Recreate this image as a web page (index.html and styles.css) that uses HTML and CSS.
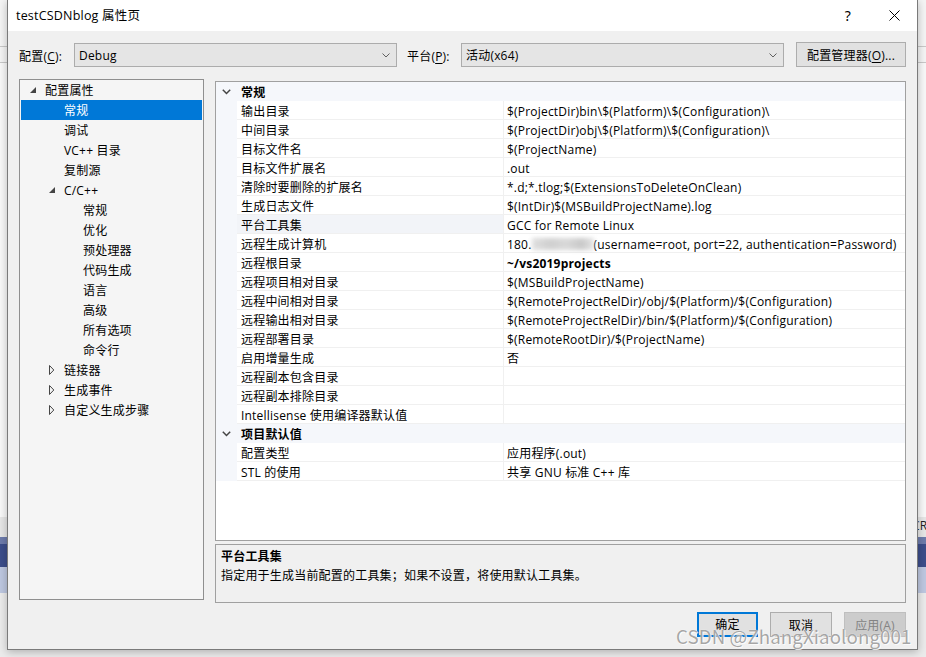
FILE: index.html
```html
<!DOCTYPE html>
<html lang="zh-CN">
<head>
<meta charset="utf-8">
<title>testCSDNblog 属性页</title>
<link rel="stylesheet" href="styles.css">
</head>
<body>
<div class="screen">
  <span class="behind-text">CR</span>
  <div class="dialog">
    <div class="titlebar">
      <span class="title">testCSDNblog 属性页</span>
      <span class="cap-btn help">?</span>
      <span class="cap-btn close">
        <svg width="11" height="11" viewBox="0 0 11 11"><path d="M0.5 0.5 L10.5 10.5 M10.5 0.5 L0.5 10.5" stroke="#000" stroke-width="1" fill="none"/></svg>
      </span>
    </div>
    <div class="content">
      <div class="toolbar">
        <span class="tb-label">配置(<u>C</u>):</span>
        <div class="combo"><span>Debug</span>
          <svg class="chev" width="8" height="5" viewBox="0 0 8 5"><path d="M0.5 0.5 L4 4 L7.5 0.5" stroke="#606060" stroke-width="1" fill="none"/></svg>
        </div>
        <span class="tb-label second">平台(<u>P</u>):</span>
        <div class="combo"><span>活动(x64)</span>
          <svg class="chev" width="8" height="5" viewBox="0 0 8 5"><path d="M0.5 0.5 L4 4 L7.5 0.5" stroke="#606060" stroke-width="1" fill="none"/></svg>
        </div>
        <div class="btn mgr">配置管理器(<u>O</u>)...</div>
      </div>

      <div class="main">
        <div class="tree">
          <div class="ti l0"><span class="ic"><svg width="6" height="6" viewBox="0 0 6 6"><polygon points="6,0 6,6 0,6" fill="#444"/></svg></span>配置属性</div>
          <div class="ti l1 sel"><span class="ic"></span>常规</div>
          <div class="ti l1"><span class="ic"></span>调试</div>
          <div class="ti l1"><span class="ic"></span>VC++ 目录</div>
          <div class="ti l1"><span class="ic"></span>复制源</div>
          <div class="ti l1"><span class="ic"><svg width="6" height="6" viewBox="0 0 6 6"><polygon points="6,0 6,6 0,6" fill="#444"/></svg></span>C/C++</div>
          <div class="ti l2"><span class="ic"></span>常规</div>
          <div class="ti l2"><span class="ic"></span>优化</div>
          <div class="ti l2"><span class="ic"></span>预处理器</div>
          <div class="ti l2"><span class="ic"></span>代码生成</div>
          <div class="ti l2"><span class="ic"></span>语言</div>
          <div class="ti l2"><span class="ic"></span>高级</div>
          <div class="ti l2"><span class="ic"></span>所有选项</div>
          <div class="ti l2"><span class="ic"></span>命令行</div>
          <div class="ti l1"><span class="ic"><svg width="6" height="10" viewBox="0 0 6 10"><polygon points="0.5,0.5 4.8,5 0.5,9.5" fill="none" stroke="#444" stroke-width="1"/></svg></span>链接器</div>
          <div class="ti l1"><span class="ic"><svg width="6" height="10" viewBox="0 0 6 10"><polygon points="0.5,0.5 4.8,5 0.5,9.5" fill="none" stroke="#444" stroke-width="1"/></svg></span>生成事件</div>
          <div class="ti l1"><span class="ic"><svg width="6" height="10" viewBox="0 0 6 10"><polygon points="0.5,0.5 4.8,5 0.5,9.5" fill="none" stroke="#444" stroke-width="1"/></svg></span>自定义生成步骤</div>
        </div>

        <div class="right">
          <div class="grid">
            <div class="cat"><span class="mg"><svg width="9" height="6" viewBox="0 0 9 6"><path d="M0.8 0.8 L4.5 4.5 L8.2 0.8" stroke="#444" stroke-width="1.5" fill="none"/></svg></span><span class="cat-label">常规</span></div>
            <div class="row"><span class="mg"></span><span class="lab">输出目录</span><span class="val">$(ProjectDir)bin\$(Platform)\$(Configuration)\</span></div>
            <div class="row"><span class="mg"></span><span class="lab">中间目录</span><span class="val">$(ProjectDir)obj\$(Platform)\$(Configuration)\</span></div>
            <div class="row"><span class="mg"></span><span class="lab">目标文件名</span><span class="val">$(ProjectName)</span></div>
            <div class="row"><span class="mg"></span><span class="lab">目标文件扩展名</span><span class="val">.out</span></div>
            <div class="row"><span class="mg"></span><span class="lab">清除时要删除的扩展名</span><span class="val">*.d;*.tlog;$(ExtensionsToDeleteOnClean)</span></div>
            <div class="row"><span class="mg"></span><span class="lab">生成日志文件</span><span class="val">$(IntDir)$(MSBuildProjectName).log</span></div>
            <div class="row cur"><span class="mg"></span><span class="lab">平台工具集</span><span class="val">GCC for Remote Linux</span></div>
            <div class="row"><span class="mg"></span><span class="lab">远程生成计算机</span><span class="val">180.<span class="blur"></span>(username=root, port=22, authentication=Password)</span></div>
            <div class="row"><span class="mg"></span><span class="lab">远程根目录</span><span class="val bold">~/vs2019projects</span></div>
            <div class="row"><span class="mg"></span><span class="lab">远程项目相对目录</span><span class="val">$(MSBuildProjectName)</span></div>
            <div class="row"><span class="mg"></span><span class="lab">远程中间相对目录</span><span class="val">$(RemoteProjectRelDir)/obj/$(Platform)/$(Configuration)</span></div>
            <div class="row"><span class="mg"></span><span class="lab">远程输出相对目录</span><span class="val">$(RemoteProjectRelDir)/bin/$(Platform)/$(Configuration)</span></div>
            <div class="row"><span class="mg"></span><span class="lab">远程部署目录</span><span class="val">$(RemoteRootDir)/$(ProjectName)</span></div>
            <div class="row"><span class="mg"></span><span class="lab">启用增量生成</span><span class="val">否</span></div>
            <div class="row"><span class="mg"></span><span class="lab">远程副本包含目录</span><span class="val"></span></div>
            <div class="row"><span class="mg"></span><span class="lab">远程副本排除目录</span><span class="val"></span></div>
            <div class="row"><span class="mg"></span><span class="lab">Intellisense 使用编译器默认值</span><span class="val"></span></div>
            <div class="cat"><span class="mg"><svg width="9" height="6" viewBox="0 0 9 6"><path d="M0.8 0.8 L4.5 4.5 L8.2 0.8" stroke="#444" stroke-width="1.5" fill="none"/></svg></span><span class="cat-label">项目默认值</span></div>
            <div class="row"><span class="mg"></span><span class="lab">配置类型</span><span class="val">应用程序(.out)</span></div>
            <div class="row"><span class="mg"></span><span class="lab">STL 的使用</span><span class="val">共享 GNU 标准 C++ 库</span></div>
          </div>
          <div class="desc">
            <div class="desc-title">平台工具集</div>
            <div class="desc-text">指定用于生成当前配置的工具集；如果不设置，将使用默认工具集。</div>
          </div>
        </div>
      </div>

      <div class="buttons">
        <div class="btn ok">确定</div>
        <div class="btn cancel">取消</div>
        <div class="btn apply">应用(A)</div>
      </div>
    </div>
  </div>
  <div class="watermark">CSDN @ZhangXiaolong001</div>
</div>
</body>
</html>
```

FILE: styles.css
```css
html, body {
  margin: 0;
  padding: 0;
}
body {
  width: 926px;
  height: 657px;
  overflow: hidden;
  font-family: "Open Sans", "Noto Sans CJK SC", sans-serif;
  font-size: 12px;
  letter-spacing: 0.2px;
  color: #000;
  background: linear-gradient(to bottom,
    #f4f4f4 0, #f4f4f4 46px, #c8c8c8 46px, #c8c8c8 47px,
    #f4f4f4 47px, #f4f4f4 62px, #c8c8c8 62px, #c8c8c8 63px,
    #f8f8f8 63px, #f8f8f8 517px, #e6e6e6 517px, #e6e6e6 537px,
    #6d7bab 537px, #6d7bab 544px, #3c4d8a 544px, #3c4d8a 567px,
    #bdc7e0 567px, #bdc7e0 593px, #ebebeb 593px, #ebebeb 657px);
}
.screen {
  position: relative;
  width: 926px;
  height: 657px;
}
.behind-text {
  position: absolute;
  left: 912px;
  top: 518px;
  font-size: 12px;
  line-height: 16px;
  color: #222;
}
.dialog {
  position: relative;
  margin-left: 7px;
  width: 911px;
  height: 650px;
  box-sizing: border-box;
  border: 1px solid #7a7a7a;
  border-top: none;
  background: #f0f0f0;
  box-shadow: 0 2px 8px rgba(0, 0, 0, 0.25);
  display: flex;
  flex-direction: column;
}
.titlebar {
  height: 31px;
  background: #fff;
  display: flex;
  align-items: center;
  padding-left: 8px;
  flex-shrink: 0;
}
.title {
  font-size: 12.5px;
  line-height: 16px;
  margin-top: 1px;
}
.cap-btn {
  width: 46px;
  height: 31px;
  display: flex;
  align-items: center;
  justify-content: center;
}
.help {
  margin-left: auto;
  font-size: 14px;
  font-family: "Noto Sans", sans-serif;
  padding-bottom: 1px;
  box-sizing: border-box;
}
.content {
  padding: 11px 11px 0 11px;
  flex: 1;
}
.toolbar {
  display: flex;
  align-items: flex-start;
  height: 25px;
}
.tb-label {
  width: 55px;
  line-height: 25px;
  padding-top: 2px;
  flex-shrink: 0;
}
.tb-label.second {
  width: 54px;
  margin-left: 10px;
}
u {
  text-decoration: underline;
  text-underline-offset: 2px;
}
.combo {
  width: 323px;
  height: 24px;
  margin-top: 1px;
  box-sizing: border-box;
  border: 1px solid #acacac;
  background: #e5e5e5;
  display: flex;
  align-items: center;
  padding: 2px 6px 0 4px;
  line-height: 18px;
}
.combo .chev {
  margin-left: auto;
  margin-top: -1px;
}
.btn {
  box-sizing: border-box;
  height: 25px;
  border: 1px solid #adadad;
  background: #e1e1e1;
  display: flex;
  align-items: center;
  justify-content: center;
  line-height: 18px;
  padding-top: 2px;
}
.btn.mgr {
  width: 110px;
  margin-left: 12px;
}
.main {
  display: flex;
  gap: 11px;
  margin-top: 12px;
  height: 524px;
}
.tree {
  width: 185px;
  height: 521px;
  box-sizing: border-box;
  border: 1px solid #8f8f8f;
  background: #f5f5f5;
  padding: 0 1px;
}
.ti {
  height: 20px;
  box-sizing: border-box;
  padding-top: 2px;
  line-height: 18px;
  display: flex;
  align-items: center;
  white-space: nowrap;
}
.ti .ic {
  width: 15px;
  height: 18px;
  margin-top: -2px;
  display: flex;
  align-items: center;
  flex-shrink: 0;
}
.ti.l0 { padding-left: 9px; }
.ti.l1 { padding-left: 28px; }
.ti.l2 { padding-left: 47px; }
.ti.sel {
  background: #0078d7;
  color: #fff;
}
.right {
  width: 691px;
  margin-top: 2px;
  display: flex;
  flex-direction: column;
}
.grid {
  height: 460px;
  box-sizing: border-box;
  border: 1px solid #a0a0a0;
  background: #fff;
}
.cat, .row {
  display: flex;
  height: 19px;
}
.mg {
  width: 21px;
  flex-shrink: 0;
  background: #f5f7fb;
  display: flex;
  align-items: center;
  justify-content: center;
}
.cat {
  background: #f5f7fb;
}
.cat .mg svg {
  margin-top: 1px;
}
.cat-label {
  font-weight: bold;
  padding: 2px 0 0 4px;
  line-height: 18px;
}
.lab {
  flex-shrink: 0;
  border-right: 1px solid #f0f0f0;
  border-bottom: 1px solid #f0f0f0;
  padding: 2px 0 0 4px;
  box-sizing: border-box;
  width: 267px;
  line-height: 17px;
  white-space: nowrap;
}
.row.cur .lab {
  background: #f2f4f8;
}
.val {
  flex: 1;
  border-bottom: 1px solid #f0f0f0;
  padding: 2px 0 0 3px;
  box-sizing: border-box;
  line-height: 17px;
  white-space: nowrap;
}
.val.bold {
  font-weight: bold;
}
.blur {
  display: inline-block;
  width: 62px;
  height: 12px;
  margin-top: 2px;
  vertical-align: top;
  background: linear-gradient(to right, #d8d8d8 0, #c4c4c4 30%, #d0d0d0 55%, #bcbcbc 80%, #dedede 100%);
  filter: blur(2px);
  opacity: 0.8;
}
.desc {
  margin-top: 3px;
  height: 59px;
  box-sizing: border-box;
  border: 1px solid #a0a0a0;
  background: #f0f0f0;
  padding: 2px 5px 0 5px;
  line-height: 19px;
}
.desc-title {
  font-weight: bold;
}
.buttons {
  display: flex;
  justify-content: flex-end;
  gap: 12px;
  margin-top: 9px;
}
.btn.ok {
  width: 61px;
  border: 2px solid #0078d7;
  padding-top: 1px;
}
.btn.cancel {
  width: 62px;
}
.btn.apply {
  width: 62px;
  background: #cccccc;
  border-color: #bfbfbf;
  color: #838383;
}
.watermark {
  position: absolute;
  left: 676px;
  top: 623px;
  font-family: "Noto Sans CJK SC", sans-serif;
  font-size: 18.7px;
  letter-spacing: 0.1px;
  line-height: 26px;
  color: rgba(150, 150, 150, 0.85);
  text-shadow: 0 0 1px #fff, 1px 1px 0 rgba(255, 255, 255, 0.8);
  white-space: nowrap;
}
```
